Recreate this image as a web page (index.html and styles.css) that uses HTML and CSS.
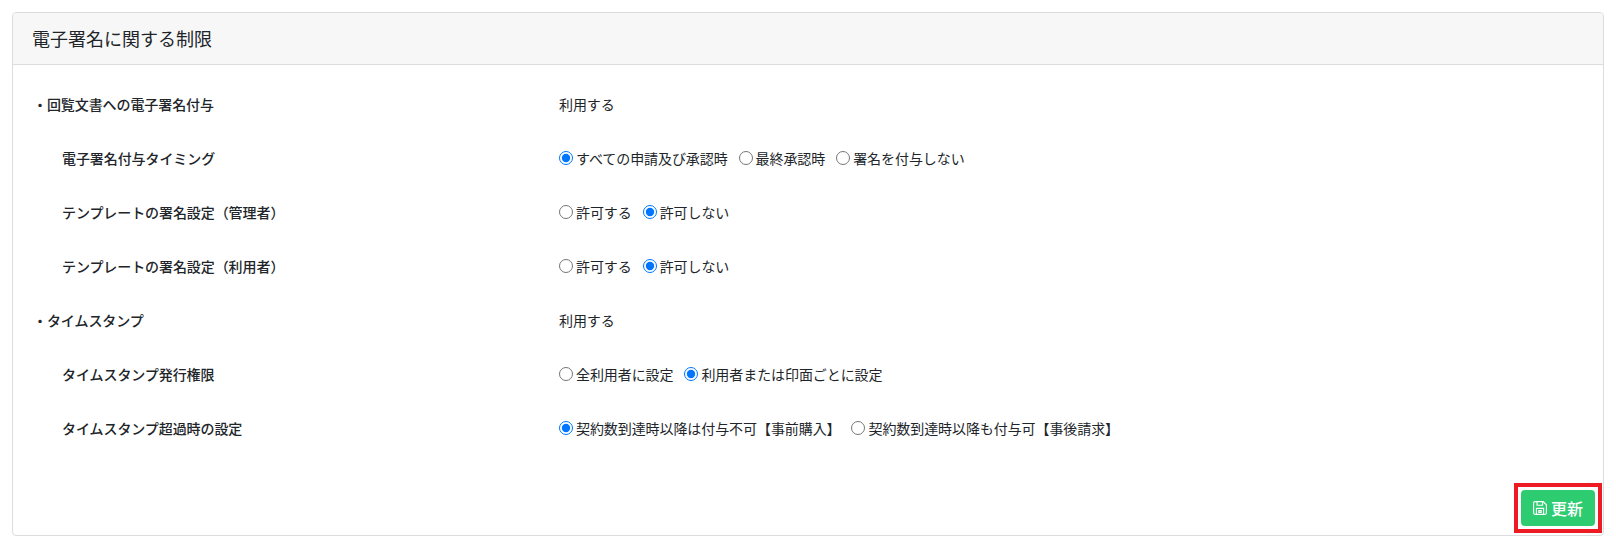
FILE: index.html
```html
<!DOCTYPE html>
<html lang="ja">
<head>
<meta charset="utf-8">
<title>電子署名に関する制限</title>
<link rel="stylesheet" href="styles.css">
</head>
<body>
<section class="card">
  <header class="card-header">電子署名に関する制限</header>
  <div class="card-body">
    <div class="row"><div class="label top">・回覧文書への電子署名付与</div><div class="value">利用する</div></div>
    <div class="row"><div class="label sub">電子署名付与タイミング</div><div class="value">
      <label class="opt"><input type="radio" name="a" checked>すべての申請及び承認時</label>
      <label class="opt"><input type="radio" name="a">最終承認時</label>
      <label class="opt"><input type="radio" name="a">署名を付与しない</label></div></div>
    <div class="row"><div class="label sub">テンプレートの署名設定（管理者）</div><div class="value">
      <label class="opt"><input type="radio" name="b">許可する</label>
      <label class="opt"><input type="radio" name="b" checked>許可しない</label></div></div>
    <div class="row"><div class="label sub">テンプレートの署名設定（利用者）</div><div class="value">
      <label class="opt"><input type="radio" name="c">許可する</label>
      <label class="opt"><input type="radio" name="c" checked>許可しない</label></div></div>
    <div class="row"><div class="label top">・タイムスタンプ</div><div class="value">利用する</div></div>
    <div class="row"><div class="label sub">タイムスタンプ発行権限</div><div class="value">
      <label class="opt"><input type="radio" name="d">全利用者に設定</label>
      <label class="opt"><input type="radio" name="d" checked>利用者または印面ごとに設定</label></div></div>
    <div class="row"><div class="label sub">タイムスタンプ超過時の設定</div><div class="value">
      <label class="opt"><input type="radio" name="e" checked>契約数到達時以降は付与不可【事前購入】</label>
      <label class="opt"><input type="radio" name="e">契約数到達時以降も付与可【事後請求】</label></div></div>
    <div class="actions">
      <div class="highlight">
        <button class="save" type="button">
          <svg class="icon" viewBox="0 0 14 14" width="14" height="14" fill="none" stroke="currentColor" stroke-width="1.1"><path d="M1.800.6h8.400l3.200 3.200v8a1.600 1.600 0 0 1-1.600 1.600H2.200A1.600 1.600 0 0 1 .6 11.800V1.800A1.200 1.200 0 0 1 1.800.6z"/><path d="M4 .8v3.400h5.600V.8"/><path d="M3.400 13.200V7.400h7.200v5.800"/><path d="M5.800 9.600h2.400v1.800H5.800z"/></svg>
          <span class="save-text">更新</span>
        </button>
      </div>
    </div>
  </div>
</section>
</body>
</html>
```
FILE: styles.css
```css
* { box-sizing: border-box; }
html, body { margin: 0; background: #fff; }
body {
  padding: 12px;
  font-family: "Noto Sans CJK JP", "Noto Sans", sans-serif;
  font-size: 14px;
  letter-spacing: -0.08px;
  color: #212529;
}
.card {
  height: 524px;
  border: 1px solid #dcdcdc;
  border-radius: 4px;
  display: flex;
  flex-direction: column;
}
.card-header {
  height: 52px;
  flex: none;
  padding: 0 19px 2px;
  display: flex;
  align-items: center;
  font-size: 18px;
  letter-spacing: 0;
  background: #f7f7f7;
  border-bottom: 1px solid #dcdcdc;
  border-radius: 3px 3px 0 0;
}
.card-body {
  flex: 1;
  display: flex;
  flex-direction: column;
  padding: 12px 1px 2px 22px;
}
.row {
  height: 54px;
  flex: none;
  display: flex;
  align-items: center;
}
.label { width: 524px; flex: none; font-weight: 500; }
.label.top { margin-left: -2px; width: 526px; }
.label.sub { padding-left: 27px; }
.value { display: flex; align-items: center; gap: 11px; }
.opt { display: inline-flex; align-items: center; }
.opt input {
  width: 14px;
  height: 14px;
  margin: -1px 3px 0 0;
  accent-color: #0075ff;
}
.actions { margin-top: auto; display: flex; justify-content: flex-end; }
.highlight { border: 4px solid #ed1c24; padding: 3px; line-height: 0; }
.save {
  width: 74px;
  height: 36px;
  border: 0;
  border-radius: 4px;
  background: #2ecc71;
  color: #fff;
  font: inherit;
  font-size: 16px;
  font-weight: 500;
  letter-spacing: 0;
  display: inline-flex;
  align-items: center;
  justify-content: center;
  gap: 4px;
}
.icon { flex: none; }
```
